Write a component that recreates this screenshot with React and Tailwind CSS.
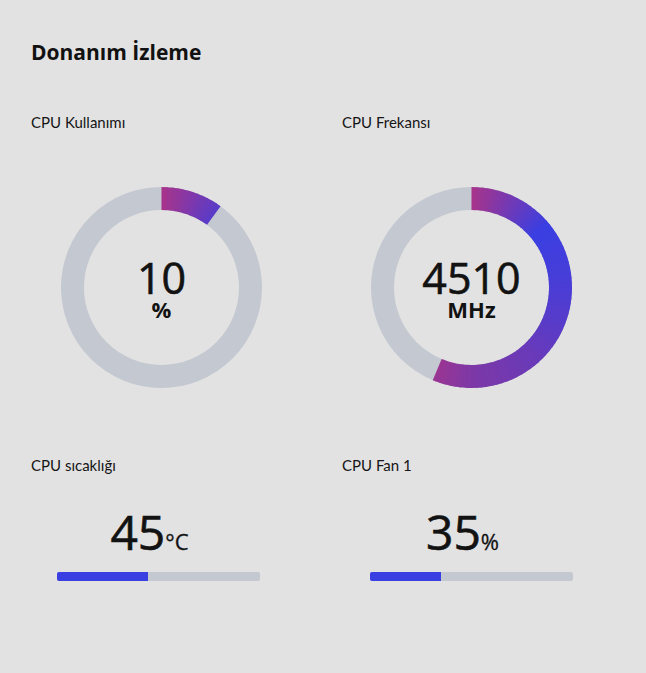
const STOPS = [
  [0, [169, 52, 138]],
  [50, [58, 63, 226]],
  [90, [74, 61, 214]],
  [140, [106, 58, 184]],
  [180, [125, 56, 166]],
  [210, [164, 52, 140]],
  [360, [164, 52, 140]],
];

function colorAt(a) {
  for (let i = 0; i < STOPS.length - 1; i++) {
    const [a0, c0] = STOPS[i];
    const [a1, c1] = STOPS[i + 1];
    if (a >= a0 && a <= a1) {
      const t = (a - a0) / (a1 - a0);
      const c = c0.map((v, k) => Math.round(v + (c1[k] - v) * t));
      return `rgb(${c[0]},${c[1]},${c[2]})`;
    }
  }
  return "rgb(164,52,140)";
}

function pt(c, r, a) {
  const rad = (a * Math.PI) / 180;
  return [c + r * Math.sin(rad), c - r * Math.cos(rad)];
}

function Ring({ percent, value, unit }) {
  const size = 201;
  const c = size / 2;
  const r = 89;
  const end = percent * 3.6;
  const step = 3;
  const segs = [];
  for (let a = 0; a < end; a += step) {
    const b = Math.min(a + step + 0.6, end);
    const [x0, y0] = pt(c, r, a);
    const [x1, y1] = pt(c, r, b);
    segs.push(
      <path
        key={a}
        d={`M ${x0} ${y0} A ${r} ${r} 0 0 1 ${x1} ${y1}`}
        stroke={colorAt(a + step / 2)}
        strokeWidth="23"
        fill="none"
      />
    );
  }
  return (
    <div className="relative h-[201px] w-[201px]">
      <svg width={size} height={size} className="block">
        <circle cx={c} cy={c} r={r} stroke="#c4c8d1" strokeWidth="23" fill="none" />
        {segs}
      </svg>
      <div className="absolute inset-0 flex flex-col items-center justify-center">
        <div className="text-[43px] leading-none text-[#121212] [-webkit-text-stroke:0.6px_#121212]">{value}</div>
        <div className="text-[22px] font-bold leading-[20px] text-[#121212]">{unit}</div>
      </div>
    </div>
  );
}

const labelCls = "text-[15px] leading-[20px] text-[#151515] [font-family:Lato,'Open_Sans',sans-serif]";

function Gauge({ label, percent, value, unit, offset }) {
  return (
    <div className="flex flex-col">
      <div className={labelCls}>{label}</div>
      <div className={`mt-[55px] ${offset}`}>
        <Ring percent={percent} value={value} unit={unit} />
      </div>
    </div>
  );
}

function Stat({ label, value, unit, percent, offset }) {
  return (
    <div className="flex flex-col">
      <div className={labelCls}>{label}</div>
      <div className={`w-[203px] ${offset}`}>
        <div className="mt-[29px] flex items-baseline justify-center pr-[18px] text-[#121212]">
          <span className="text-[48px] leading-[56px] [-webkit-text-stroke:0.6px_#121212]">{value}</span>
          <span className="text-[22px] leading-none [-webkit-text-stroke:0.3px_#121212]">{unit}</span>
        </div>
        <div className="mt-[12px] h-[9px] w-[203px] rounded-[2px] bg-[#c4c8d1]">
          <div className="h-full rounded-l-[2px] bg-[#3a3fe2]" style={{ width: `${percent}%` }} />
        </div>
      </div>
    </div>
  );
}

export default function App() {
  return (
    <div
      className="h-[673px] w-[646px] bg-[#e2e2e2] pl-[31px] pt-[39px]"
      style={{ fontFamily: '"Open Sans", "Noto Sans", sans-serif' }}
    >
      <h1 className="text-[21px] font-bold leading-[26px] text-[#111]">Donanım İzleme</h1>
      <div className="mt-[47px] grid grid-cols-[311px_311px]">
        <Gauge label="CPU Kullanımı" percent={10} value="10" unit="%" offset="ml-[30px]" />
        <Gauge label="CPU Frekansı" percent={56.3} value="4510" unit="MHz" offset="ml-[29px]" />
      </div>
      <div className="mt-[67px] grid grid-cols-[311px_311px]">
        <Stat label="CPU sıcaklığı" value="45" unit="°C" percent={45} offset="ml-[26px]" />
        <Stat label="CPU Fan 1" value="35" unit="%" percent={35} offset="ml-[28px]" />
      </div>
    </div>
  );
}
